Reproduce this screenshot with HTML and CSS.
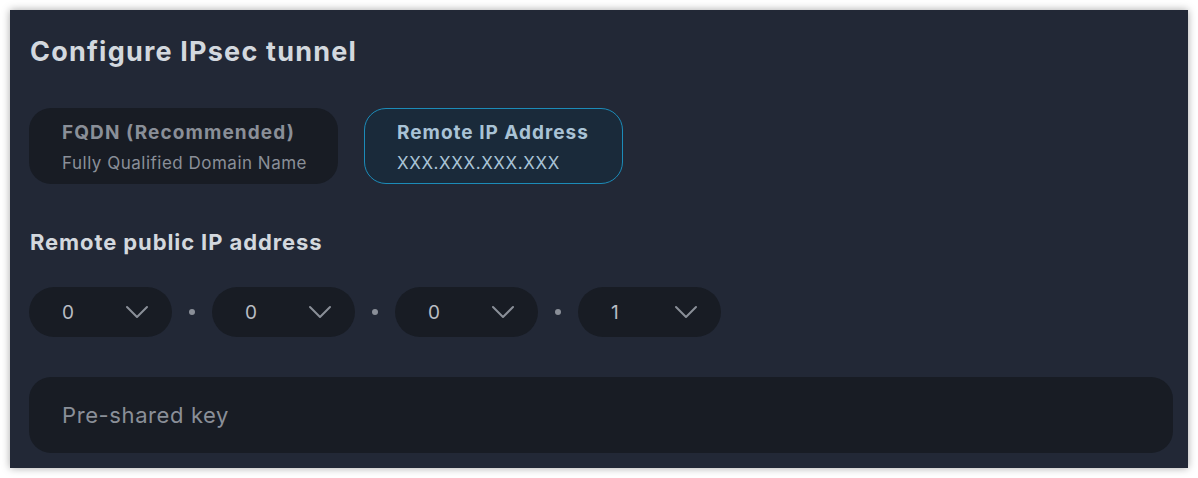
FILE: index.html
```html
<!DOCTYPE html>
<html>
<head>
<meta charset="utf-8">
<link rel="stylesheet" href="styles.css">
</head>
<body>
<div class="panel">
  <h1 class="title">Configure IPsec tunnel</h1>
  <div class="options">
    <div class="option">
      <div class="opt-title">FQDN (Recommended)</div>
      <div class="opt-sub">Fully Qualified Domain Name</div>
    </div>
    <div class="option active">
      <div class="opt-title">Remote IP Address</div>
      <div class="opt-sub">XXX.XXX.XXX.XXX</div>
    </div>
  </div>
  <h2 class="label">Remote public IP address</h2>
  <div class="ip-row">
    <div class="select"><span>0</span><svg class="chev" viewBox="0 0 24 14" width="24" height="14"><path d="M2 2 L12 12 L22 2" fill="none" stroke="#8a8f98" stroke-width="2" stroke-linecap="round" stroke-linejoin="round"/></svg></div>
    <span class="dot"></span>
    <div class="select"><span>0</span><svg class="chev" viewBox="0 0 24 14" width="24" height="14"><path d="M2 2 L12 12 L22 2" fill="none" stroke="#8a8f98" stroke-width="2" stroke-linecap="round" stroke-linejoin="round"/></svg></div>
    <span class="dot"></span>
    <div class="select"><span>0</span><svg class="chev" viewBox="0 0 24 14" width="24" height="14"><path d="M2 2 L12 12 L22 2" fill="none" stroke="#8a8f98" stroke-width="2" stroke-linecap="round" stroke-linejoin="round"/></svg></div>
    <span class="dot"></span>
    <div class="select"><span>1</span><svg class="chev" viewBox="0 0 24 14" width="24" height="14"><path d="M2 2 L12 12 L22 2" fill="none" stroke="#8a8f98" stroke-width="2" stroke-linecap="round" stroke-linejoin="round"/></svg></div>
  </div>
  <div class="input">Pre-shared key</div>
</div>
</body>
</html>
```

FILE: styles.css
```css
* { box-sizing: border-box; }
html, body { margin: 0; padding: 0; background: #ffffff; }
body {
  padding: 10px;
  font-family: Inter, "Noto Sans", sans-serif;
  width: 1198px;
  height: 478px;
  overflow: hidden;
}
.panel {
  width: 1178px;
  height: 458px;
  background: #222836;
  box-shadow: 0 0 8px rgba(0,0,0,0.35);
  padding: 28px 15px 0 19px;
}
.title {
  margin: 0 0 0 1px;
  font-size: 27px;
  font-weight: 700;
  color: #d3d8de;
  line-height: 28px;
  letter-spacing: 1.2px;
}
.options {
  display: flex;
  gap: 26px;
  margin-top: 42px;
}
.option {
  height: 76px;
  border-radius: 22px;
  background: #181c24;
  padding: 13px 0 0 33px;
  width: 309px;
}
.option.active {
  width: 259px;
  background: #1a2a3a;
  border: 1px solid #1c8bb8;
  padding: 12px 0 0 32px;
}
.opt-title {
  font-size: 19px;
  font-weight: 700;
  color: #8a8f98;
  line-height: 24px;
  letter-spacing: 1.1px;
}
.opt-sub {
  font-size: 17px;
  color: #8a8f98;
  line-height: 20px;
  margin-top: 8px;
  letter-spacing: 0.5px;
}
.option.active .opt-title { color: #a9c3d6; letter-spacing: 1px; }
.option.active .opt-sub { color: #a9c3d6; letter-spacing: 0.6px; }
.label {
  margin: 45px 0 0 1px;
  font-size: 22px;
  font-weight: 700;
  color: #d3d8de;
  line-height: 26px;
  letter-spacing: 0.9px;
}
.ip-row {
  display: flex;
  align-items: center;
  margin-top: 32px;
}
.select {
  width: 143px;
  height: 50px;
  border-radius: 25px;
  background: #181c24;
  display: flex;
  align-items: center;
  justify-content: space-between;
  padding: 0 23px 0 33px;
  font-size: 19px;
  color: #b8bcc3;
}
.chev { display: block; }
.dot {
  width: 6px;
  height: 6px;
  border-radius: 50%;
  background: #8a8f98;
  margin: 0 17px;
}
.input {
  margin-top: 40px;
  height: 76px;
  border-radius: 22px;
  background: #181c24;
  padding: 0 33px;
  display: flex;
  align-items: center;
  font-size: 22px;
  color: #8a8f98;
  letter-spacing: 0.6px;
}
```
